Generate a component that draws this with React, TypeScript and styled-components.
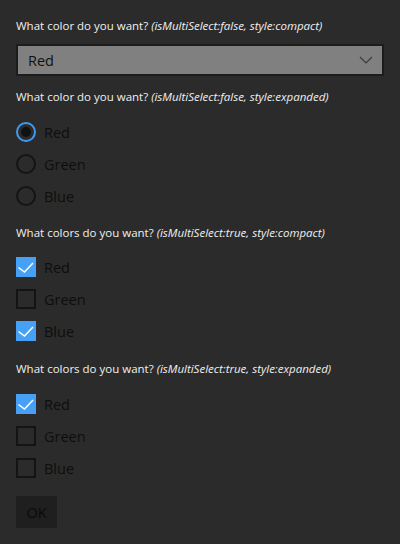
import React, { useState } from 'react'
import styled, { createGlobalStyle } from 'styled-components'

const GlobalStyle = createGlobalStyle`
  html, body {
    margin: 0;
    padding: 0;
    background: #2b2b2b;
  }
  body {
    font-family: "Open Sans", "Noto Sans", "Liberation Sans", sans-serif;
  }
`;

const Page = styled.div`
  width: 400px;
  height: 544px;
  box-sizing: border-box;
  padding: 18px 16px 0 16px;
  display: flex;
  flex-direction: column;
  background: #2b2b2b;
`;

const Section = styled.div<{ $gap: number }>`
  display: flex;
  flex-direction: column;
  margin-bottom: ${p => p.$gap}px;
`;

const Question = styled.div<{ $space?: number }>`
  font-size: 11.5px;
  line-height: 16px;
  color: #f0f0f0;
  margin-bottom: ${p => p.$space ?? 10}px;
  white-space: nowrap;

  em {
    font-style: italic;
  }
`;

const Select = styled.div`
  height: 32px;
  box-sizing: border-box;
  border: 2px solid #1c1c1c;
  background: #808080;
  display: flex;
  align-items: center;
  justify-content: space-between;
  padding: 0 9px 0 10px;
  font-size: 14.5px;
  color: #111111;
  cursor: pointer;
`;

const List = styled.div`
  display: flex;
  flex-direction: column;
`;

const Option = styled.label`
  height: 32px;
  display: flex;
  align-items: center;
  gap: 8px;
  font-size: 14.5px;
  color: #0e0e0e;
  cursor: pointer;
`;

const Radio = styled.span<{ $on: boolean }>`
  width: 20px;
  height: 20px;
  box-sizing: border-box;
  border-radius: 50%;
  border: 2px solid ${p => (p.$on ? '#3d9cf2' : '#141414')};
  display: flex;
  align-items: center;
  justify-content: center;

  &::after {
    content: '';
    width: 10px;
    height: 10px;
    border-radius: 50%;
    background: ${p => (p.$on ? '#111111' : 'transparent')};
  }
`;

const Box = styled.span<{ $on: boolean }>`
  width: 20px;
  height: 20px;
  box-sizing: border-box;
  border: 2px solid ${p => (p.$on ? '#45a0f6' : '#141414')};
  background: ${p => (p.$on ? '#45a0f6' : 'transparent')};
  display: flex;
  align-items: center;
  justify-content: center;
`;

const OkButton = styled.button`
  align-self: flex-start;
  width: 41px;
  height: 32px;
  border: none;
  background: #1f1f1f;
  color: #0a0a0a;
  font-family: inherit;
  font-size: 14.5px;
  padding: 0;
  cursor: pointer;
`;

const colors = ['Red', 'Green', 'Blue'];

function Check() {
  return (
    <svg width="20" height="20" viewBox="0 0 20 20" style={{ margin: -2 }}>
      <polyline points="2.5,10.5 8.5,15 17,6" fill="none" stroke="#ffffff" strokeWidth="1.5" />
    </svg>
  );
}

function Chevron() {
  return (
    <svg width="14" height="8" viewBox="0 0 14 8">
      <polyline points="1,1 7,7 13,1" fill="none" stroke="#3a3a3a" strokeWidth="1.2" />
    </svg>
  );
}

function CheckList({ initial }: { initial: string[] }) {
  const [picked, setPicked] = useState<string[]>(initial);
  const toggle = (c: string) =>
    setPicked(picked.includes(c) ? picked.filter(x => x !== c) : [...picked, c]);
  return (
    <List>
      {colors.map(c => (
        <Option key={c} onClick={() => toggle(c)}>
          <Box $on={picked.includes(c)}>{picked.includes(c) && <Check />}</Box>
          {c}
        </Option>
      ))}
    </List>
  );
}

export default function App() {
  const [radio, setRadio] = useState('Red');

  return (
    <Page>
      <GlobalStyle />
      <Section $gap={13}>
        <Question>
          What color do you want? <em>(isMultiSelect:false, style:compact)</em>
        </Question>
        <Select>
          <span>Red</span>
          <Chevron />
        </Select>
      </Section>

      <Section $gap={13}>
        <Question $space={11}>
          What color do you want? <em>(isMultiSelect:false, style:expanded)</em>
        </Question>
        <List>
          {colors.map(c => (
            <Option key={c} onClick={() => setRadio(c)}>
              <Radio $on={radio === c} />
              {c}
            </Option>
          ))}
        </List>
      </Section>

      <Section $gap={14}>
        <Question>
          What colors do you want? <em>(isMultiSelect:true, style:compact)</em>
        </Question>
        <CheckList initial={['Red', 'Blue']} />
      </Section>

      <Section $gap={12}>
        <Question $space={11}>
          What colors do you want? <em>(isMultiSelect:true, style:expanded)</em>
        </Question>
        <CheckList initial={['Red']} />
      </Section>

      <OkButton>OK</OkButton>
    </Page>
  );
}
